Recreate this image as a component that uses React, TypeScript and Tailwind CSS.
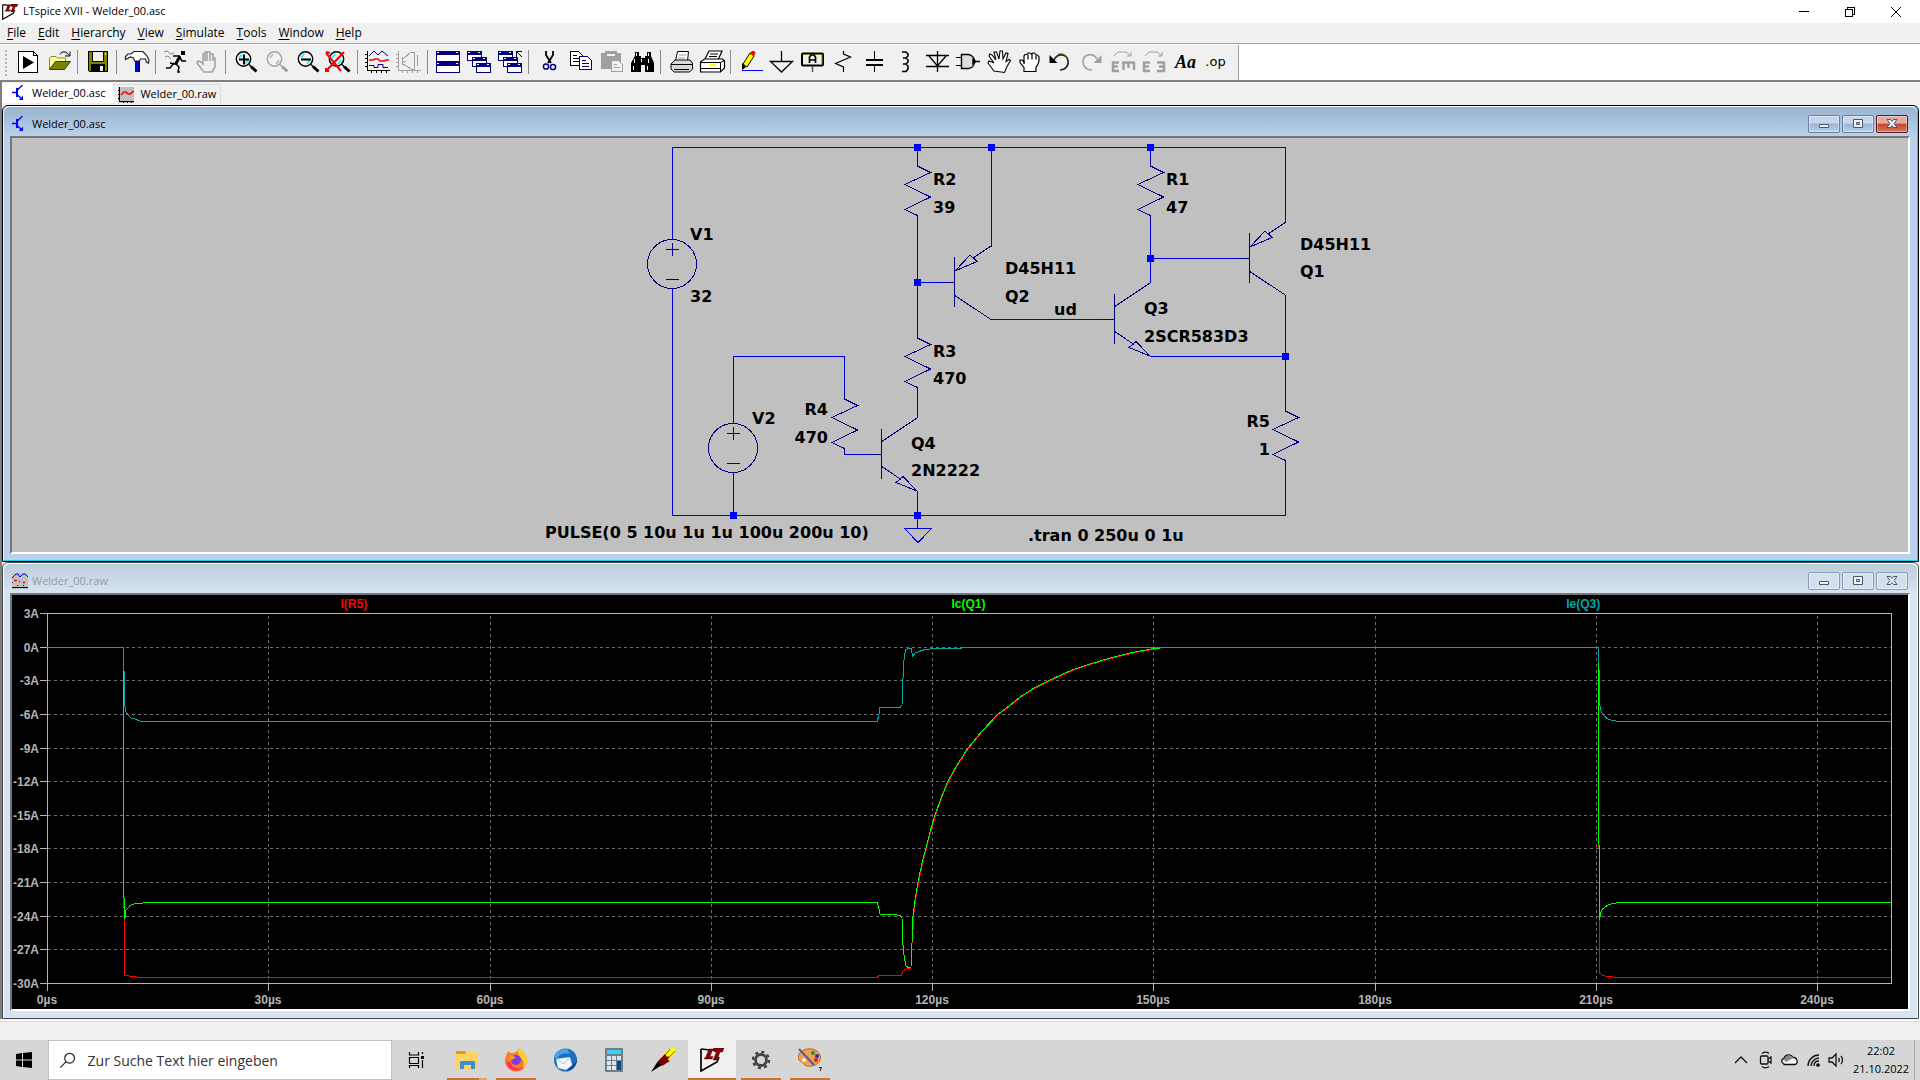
import type { ReactNode } from 'react'

const NAVY = '#000080'
const GRAY = '#a0a0a0'

const menus = ['File', 'Edit', 'Hierarchy', 'View', 'Simulate', 'Tools', 'Window', 'Help']

/* ---------- Toolbar icons, drawn in a 31x24 box ---------- */

function Magnifier({ color = '#000', glass = '#00ffff', children }: { color?: string; glass?: string; children?: ReactNode }) {
    return (
        <>
            <circle cx="12.5" cy="9" r="7.2" fill="#f4f4f4" stroke={color} strokeWidth="1.4" />
            <path d="M8 8l3-4M14 14l3-4" stroke={glass} strokeWidth="1.6" />
            <path d="M18 14.5l2 2" stroke={color} strokeWidth="1.5" />
            <path d="M20 16.5l5.5 5" stroke={color} strokeWidth="3" />
            {children}
        </>
    )
}

function MiniWindow({ x, y }: { x: number; y: number }) {
    return (
        <g shapeRendering="crispEdges">
            <rect x={x + 0.5} y={y + 0.5} width="14" height="9" fill="#fff" stroke={NAVY} />
            <rect x={x} y={y} width="15" height="4" fill={NAVY} />
            <rect x={x + 1} y={y + 1} width="2" height="1" fill="#fff" />
            <rect x={x + 11} y={y + 1} width="2" height="1" fill="#fff" />
        </g>
    )
}

function Cascade() {
    return (
        <>
            <MiniWindow x={3} y={1} />
            <MiniWindow x={8} y={7} />
            <MiniWindow x={12} y={13} />
        </>
    )
}

type Tool = { name: string; icon: ReactNode }

const toolGroups: Tool[][] = [
    [
        {
            name: 'New schematic',
            icon: (
                <>
                    <path d="M5.5 1.5h15l4 4v17h-19z" fill="#fff" stroke="#000" shapeRendering="crispEdges" />
                    <path d="M20.5 1.5v4h4" fill="none" stroke="#000" shapeRendering="crispEdges" />
                    <path d="M10 6l11 6.5-11 6.5z" fill="#000" />
                </>
            ),
        },
        {
            name: 'Open',
            icon: (
                <>
                    <path d="M5.5 19V8L7 6.5h5L13.5 8h8v5H11z" fill="#ffff9a" stroke="#8a8a20" />
                    <path d="M5.5 19.5l6-8h15l-6 8z" fill="#808000" stroke="#3c3c00" />
                    <path d="M16 4.5L18 2h4l3 3.5M26 1.5V6h-5" fill="none" stroke="#000" />
                </>
            ),
        },
    ],
    [
        {
            name: 'Save',
            icon: (
                <g shapeRendering="crispEdges">
                    <path d="M5 1h20v21H6l-1-1z" fill="#000" />
                    <path d="M6 2h18v19H6z" fill="#808000" />
                    <path d="M9 1h12v11H9z" fill="#000" />
                    <path d="M10 2h10v9H10zM22 3h1v2h-1z" fill="#f0f0f0" />
                    <path d="M8 14h14v8H8z" fill="#000" />
                    <path d="M17 16h3v5h-3z" fill="#f0f0f0" />
                </g>
            ),
        },
    ],
    [
        {
            name: 'Control panel',
            icon: (
                <>
                    <path d="M3.5 9.5v-3L6 4h3l3-2.5h9L25 6l2 4-.5 3-2-1-1-3h-5l-1 2h-5l-1-3-3-1z" fill="#fff" stroke="#222" strokeWidth="1.2" />
                    <path d="M13 11h5v11h-5z" fill="#0000ff" />
                    <path d="M16 11h2v11h-2z" fill={NAVY} />
                </>
            ),
        },
    ],
    [
        {
            name: 'Run',
            icon: (
                <>
                    <path d="M20 1h4v4h-4z" fill="#000" />
                    <path d="M19 6l-5 8-5-1M12 6h6l3 5h4M14 13l4 4-1 5h2M13 13l-4 5H5" fill="none" stroke="#000" strokeWidth="1.5" />
                    <path d="M18 5l-5 9 3 1 4-8z" fill="#000" />
                    <path d="M3 2l3-1 4 3 3-1M4 7l3-1 3 3" fill="none" stroke="#888" />
                </>
            ),
        },
        {
            name: 'Halt',
            icon: (
                <path
                    d="M11 21l-6-8 1-2 3 1 2 2V4h2v7M13 11V2h2v9M15 11V2h3v9M18 11V4h3v7M21 8h2v9l-3 5h-9"
                    fill="none"
                    stroke={GRAY}
                    strokeWidth="1.5"
                />
            ),
        },
    ],
    [
        { name: 'Zoom in', icon: <Magnifier><path d="M8 9.5h10M13 4.5v10" stroke="#000" strokeWidth="2" /></Magnifier> },
        { name: 'Pan', icon: <Magnifier color={GRAY} glass="#b8b8b8" /> },
        { name: 'Zoom out', icon: <Magnifier><path d="M8 9.5h10" stroke="#000" strokeWidth="2" /></Magnifier> },
        {
            name: 'Zoom to fit',
            icon: (
                <Magnifier>
                    <path d="M2 3l15 18M20 2L3 20M2 2l4 1M2 18v3h3" fill="none" stroke="#ff0000" strokeWidth="2" />
                </Magnifier>
            ),
        },
    ],
    [
        {
            name: 'Autorange',
            icon: (
                <g fill="none">
                    <path
                        d="M4.5 1v19.5H27M2 4.5h2M2 8.5h2M2 12.5h2M2 16.5h2M8.5 21v2M13.5 21v2M18.5 21v2M23.5 21v2"
                        stroke="#000"
                        shapeRendering="crispEdges"
                    />
                    <path d="M6 6l5-5 4 4 4-4 6 5" stroke={NAVY} />
                    <path d="M6 10h4l2-1h3l2 2h4l2-1h3" stroke="#ff0000" strokeWidth="1.4" />
                    <path d="M6 15.5h5v2h4v-3h5v3h5" stroke={NAVY} />
                </g>
            ),
        },
        {
            name: 'Add trace',
            icon: (
                <g fill="none" stroke={GRAY} shapeRendering="crispEdges">
                    <path d="M4.5 1v19.5H27M2 4.5h2M2 8.5h2M2 12.5h2M2 16.5h2M8.5 21v2M13.5 21v2M18.5 21v2M23.5 21v2" />
                    <path d="M8.5 7v8M8 11.5h4M9 9l8-7h4M9 14l8 5h4M20.5 2v17M23.5 5v11" />
                </g>
            ),
        },
    ],
    [
        {
            name: 'Tile windows',
            icon: (
                <g shapeRendering="crispEdges">
                    <path d="M3.5 1.5h23v21h-23z" fill="#fff" stroke={NAVY} />
                    <path d="M3 1h24v4H3zM3 11h24v5H3z" fill={NAVY} />
                    <path d="M4 2h2v1H4zM23 2h2v1h-2zM4 13h2v1H4zM23 13h2v1h-2z" fill="#fff" />
                </g>
            ),
        },
        { name: 'Cascade windows', icon: <Cascade /> },
        {
            name: 'Close all windows',
            icon: (
                <>
                    <Cascade />
                    <path d="M19 0h9v7h-9z" fill="#f0f0f0" />
                    <path d="M21.5 7V1.5H27M22 2l5 5" fill="none" stroke="#000" />
                </>
            ),
        },
    ],
    [
        {
            name: 'Cut',
            icon: (
                <g fill="none">
                    <path d="M12 1v4l5 8M19 1v4l-5 8" stroke="#000" strokeWidth="1.8" />
                    <circle cx="12" cy="16.5" r="2.6" stroke={NAVY} strokeWidth="1.5" />
                    <circle cx="19" cy="17" r="2.6" stroke={NAVY} strokeWidth="1.5" />
                </g>
            ),
        },
        {
            name: 'Copy',
            icon: (
                <g shapeRendering="crispEdges" fill="#fff">
                    <path d="M5.5 1.5h8l4 4v10h-12z" stroke="#000" />
                    <path d="M8 5.5h4M8 8.5h7M8 11.5h7" stroke="#000" />
                    <path d="M14.5 6.5h8l4 4v9h-12z" stroke={NAVY} />
                    <path d="M17 10.5h4M17 13.5h7M17 16.5h7" stroke={NAVY} />
                </g>
            ),
        },
        {
            name: 'Paste',
            icon: (
                <g shapeRendering="crispEdges">
                    <path d="M5 3h4V1h12v2h4v16H5z" fill={GRAY} />
                    <path d="M11 4h8v2h-8z" fill="#f0f0f0" />
                    <path d="M15.5 10.5h7l4 4v7h-11z" fill="#f0f0f0" stroke={GRAY} />
                    <path d="M18 14.5h3M18 17.5h6" stroke={GRAY} />
                </g>
            ),
        },
        {
            name: 'Find',
            icon: (
                <>
                    <path d="M8 2h4v4h2v2h4V6h2V2h4v4l3 7v9h-9v-7h-4v7H4v-9l4-7z" fill="#000" />
                    <path d="M9 3h1v3H9zM21 3h1v3h-1zM7 9h1v4H7zM14 9h1v3h-1zM21 9h1v4h-1zM6 16h1v4H6zM20 16h1v4h-1z" fill="#fff" />
                </>
            ),
        },
    ],
    [
        {
            name: 'Print',
            icon: (
                <>
                    <path d="M9.5 11l2-9.5h11l-1 9.5" fill="#fff" stroke="#000" />
                    <path d="M13 5h7M12 8h7" stroke="#999" />
                    <path d="M5 14l4-4h15l2.5 3v6l-3 3H8l-3-3z" fill="#d8d8d8" stroke="#000" />
                    <path d="M5 14.5h21M8 19.5h15" stroke="#000" />
                </>
            ),
        },
        {
            name: 'Print setup',
            icon: (
                <>
                    <path d="M8 9l4-8h13l-4 9" fill="#fff" stroke="#000" strokeWidth="1.2" />
                    <path d="M13 4h8M12 6.5h8" stroke="#000" />
                    <path d="M3.5 12l4-3h18l2 2v7l-4 4h-20z" fill="#fff" stroke="#000" strokeWidth="1.2" />
                    <path d="M3.5 12.5h20l4-2M23.5 12.5v9M3.5 18.5h20" fill="none" stroke="#000" />
                    <path d="M13 14h6v2h-6z" fill="#ffff00" />
                </>
            ),
        },
    ],
    [
        {
            name: 'Draw wire',
            icon: (
                <>
                    <path d="M7 14l7-11 4 3-7 11z" fill="#ffff00" stroke="#000" />
                    <path d="M14 3l2-2h2l1.500 1.500L18 6.500z" fill="#ff0000" />
                    <path d="M6 13l4 4-4 3z" fill="#000" />
                    <path d="M6 20.5h21" stroke="#0000ff" shapeRendering="crispEdges" />
                </>
            ),
        },
        { name: 'Ground', icon: <path d="M14.5 1v10M3.5 11.5h22L14.5 22z" fill="none" stroke="#000" strokeWidth="1.3" /> },
        {
            name: 'Label net',
            icon: (
                <g fill="none">
                    <rect x="4" y="3.5" width="21" height="12" rx="1" stroke="#000" strokeWidth="2" />
                    <path d="M5 4.5h19v10" stroke="#808000" />
                    <path d="M11.5 13V7L13 5h3l1.5 2v6M11.5 10h6" stroke="#000" strokeWidth="1.7" />
                    <path d="M14.5 16v6" stroke="#555" strokeWidth="1.5" />
                </g>
            ),
        },
        { name: 'Resistor', icon: <path d="M14.500 1v3l7 3-15 6.500 8 3.500v5" fill="none" stroke="#000" strokeWidth="1.2" /> },
        {
            name: 'Capacitor',
            icon: (
                <>
                    <path d="M14.500 1v9M14.500 15v7" stroke="#000" />
                    <path d="M6 10h17M6 15h17" stroke="#000" strokeWidth="2" />
                </>
            ),
        },
        {
            name: 'Inductor',
            icon: <path d="M11 2h4l2 2v2l-2 2h-3M15 8l2 2v2l-2 2h-3M15 14l2 2v3l-2 2.5h-4" fill="none" stroke="#000" strokeWidth="1.6" />,
        },
        {
            name: 'Diode',
            icon: <path d="M15.5 1v21M4 5.5h23M4 16.5h23M7 6l8.5 10L24 6" fill="none" stroke="#000" strokeWidth="1.3" />,
        },
        {
            name: 'Component',
            icon: (
                <>
                    <path d="M8.5 4.5h7c8 1 8 13 0 14h-7z" fill="#ddd" stroke="#000" strokeWidth="1.4" />
                    <path d="M3 7.5h5M3 15.5h5" stroke="#000" />
                    <path d="M20 11.5h7M20 9.5l3 2-3 2z" stroke="#000" strokeWidth="1.5" />
                </>
            ),
        },
        {
            name: 'Move',
            icon: (
                <path
                    d="M10 21l-6-8 1-2 3 1 2 1-5-7 1-2 2 1 4 5-2-8h2.5l2.500 7 1-8h2.500l.5 8 3-6 2 .5-2 8 3-2 1.500 1-4 7-2 5z"
                    fill="#fff"
                    stroke="#000"
                    strokeWidth="1.1"
                />
            ),
        },
        {
            name: 'Drag',
            icon: (
                <g stroke="#000" strokeWidth="1.2">
                    <path d="M9 21.500v-4l-4-5V10h2l2 2V6l1-1.500h2L13 3h2l1.500 1L18 3h1.500L21 5h1.500L24 7v4l-1 3-2 3.500v4z" fill="#fff" />
                    <path d="M13 4.500v5M17 4v5.500M21 5.500v4M9 11v3" fill="none" />
                </g>
            ),
        },
        {
            name: 'Undo',
            icon: (
                <>
                    <path d="M8 10c3-7 13-7 14 1 1 5-3 9-8 9" fill="none" stroke="#222" strokeWidth="1.6" />
                    <path d="M12 4c4-1 8 0 9 5" fill="none" stroke="#808000" />
                    <path d="M3.500 5v8h8z" fill="#000" />
                </>
            ),
        },
        {
            name: 'Redo',
            icon: (
                <>
                    <path d="M20 9c-4-7-14-5-14 3 0 5 4 8 9 8" fill="none" stroke={GRAY} strokeWidth="1.6" />
                    <path d="M24.500 5v8h-8z" fill={GRAY} />
                </>
            ),
        },
        {
            name: 'Rotate',
            icon: (
                <g fill="none" stroke={GRAY}>
                    <path d="M6 6l4-4h8l5 4M23 2v4h-4" />
                    <path d="M11 12.500H5v8.500h6M5 16.500h5M14 12.500h13M15.500 12v8M20.500 12v6M26 12v8" strokeWidth="2.500" />
                </g>
            ),
        },
        {
            name: 'Mirror',
            icon: (
                <g fill="none" stroke={GRAY}>
                    <path d="M6 6l4-4h8l5 4M23 2v4h-4" />
                    <path d="M11 12.500H5v8.500h6M5 16.500h5M18 12.500h7v8.500h-7M25 16.500h-5" strokeWidth="2.500" />
                </g>
            ),
        },
    ],
]

/* ---------- MDI window pieces ---------- */

function TransistorIcon() {
    return (
        <svg viewBox="0 0 16 16" className="h-4 w-4" fill="none" stroke="#0000ff" strokeWidth="1.4" aria-hidden="true">
            <path d="M0 7.5h5M10.500 0L5 5.500M5 9.500l5 4.500" />
            <path d="M5 3v9" strokeWidth="2" />
            <path d="M11 10.500V15H7z" fill="#0000ff" stroke="none" />
        </svg>
    )
}

function WaveIcon() {
    return (
        <svg viewBox="0 0 16 16" className="h-4 w-4" fill="none" aria-hidden="true">
            <path d="M0 0h16v16H0z" fill="#c0c0c0" />
            <path d="M1.5 0v14.5H16M0 3.5h1M0 7.5h1M0 11.5h1M5.5 14v2M9.5 14v2M13.5 14v2" stroke="#000" />
            <path d="M3 8l3-3h2l2 2h2l4-3" stroke="#ff0000" strokeWidth="1.6" />
        </svg>
    )
}

function PlotIcon() {
    return (
        <svg viewBox="0 0 16 16" className="h-4 w-4" fill="none" aria-hidden="true">
            <path d="M0 0h16v16H0z" fill="#c0c0c0" />
            <path d="M1 4l3-3h2l2 3 3-3h2l3 3" stroke="#0000ff" />
            <path d="M2 7.5h3M7 8.5h1M11 9.5h2" stroke="#ff0000" strokeWidth="1.5" />
            <path d="M0 14.5h16M0 4.5h1M0 9.5h1M5 12.5h1M11 12.5h1" stroke="#000" />
        </svg>
    )
}

const glyphs = {
    minimize: <path d="M11.5 9.5h9v3h-9z" />,
    maximize: <path d="M11.5 4.5h9v8h-9zM14.5 7.5h3v2h-3z" fillRule="evenodd" />,
    close: <path d="M11 4.5h3.5l1.500 2 1.500-2H21l-3 4 3 4h-3.500l-1.500-2-1.500 2H11l3-4z" />,
}

function ChildButton({ kind, active }: { kind: keyof typeof glyphs; active: boolean }) {
    let look = 'border-[#8c9cb8] bg-[#d3e0ee]'
    if (active) {
        look =
            kind === 'close'
                ? 'border-[#5a1a20] bg-linear-to-b from-[#e8a79c] from-45% via-[#c0452f] via-50% to-[#d47a62]'
                : 'border-[#6b7f9d] bg-linear-to-b from-[#c3d6eb] from-45% via-[#9ab5d2] via-50% to-[#b9d1ea]'
    }
    return (
        <button aria-label={kind} className={`h-[18px] w-8 rounded-xs border inset-ring inset-ring-white/40 ${look}`}>
            <svg viewBox="1 1 30 16" className="h-4 w-full" fill="#f4f4f4" stroke="#4a5670" aria-hidden="true">
                {glyphs[kind]}
            </svg>
        </button>
    )
}

function ChildWindow({ title, icon, active, children }: { title: string; icon: ReactNode; active: boolean; children: ReactNode }) {
    return (
        <section
            className={`flex min-h-0 flex-1 flex-col rounded-t-md border ${
                active ? 'border-black bg-[#b9d1ea]' : 'border-[#4a4a4a] bg-[#d7e4f2]'
            }`}
        >
            <div
                className={`flex min-h-0 flex-1 flex-col rounded-t-md border-x pr-[7px] pl-[6px] ${
                    active
                        ? 'border-b border-l-[#e8f2fc] border-r-[#20d0f0] border-b-[#20d0f0] bg-[#b9d1ea] pb-[6px]'
                        : 'border-white bg-[#d7e4f2] pb-[7px]'
                }`}
            >
                <header
                    className={`-mr-[7px] -ml-[6px] flex h-[30px] shrink-0 items-center rounded-t-md border-t border-white pt-[5px] pr-[9px] pl-2 text-[11px] ${
                        active ? 'bg-linear-to-b from-[#99b4d1] to-[#b9d1ea] text-black' : 'bg-linear-to-b from-[#bfcddb] to-[#d7e4f2] text-[#9a9a9a]'
                    }`}
                >
                    {icon}
                    <h2 className="ml-1 flex-1">{title}</h2>
                    <div className="flex gap-[2px]">
                        <ChildButton kind="minimize" active={active} />
                        <ChildButton kind="maximize" active={active} />
                        <ChildButton kind="close" active={active} />
                    </div>
                </header>
                <div className="min-h-0 flex-1 border-2 border-t-[#777] border-r-white border-b-white border-l-[#777]">{children}</div>
            </div>
        </section>
    )
}

/* ---------- Schematic ---------- */

const wires = [
    'M672.5 239V147.5H1285.5V222',
    'M672.5 289V515.5H1285.5V460',
    'M733.5 423V356.5H844.5V399',
    'M733.5 473V515',
    'M844.5 449V454.5H869',
    'M917.5 147V166M917.5 215V338M917.5 387V418M917.5 491V528',
    'M917 282.5H943M991.5 147V247M991 319.5H1102',
    'M1150.5 147V166M1150.5 215V283M1150 258.5H1237M1150 356.5H1285',
    'M1285.5 295V411',
]

const junctions = [
    [917, 147],
    [991, 147],
    [1150, 147],
    [917, 282],
    [1150, 258],
    [1285, 356],
    [733, 515],
    [917, 515],
]

const resistors = [
    [917, 166],
    [1150, 166],
    [917, 338],
    [844, 399],
    [1285, 411],
]

const labels: [number, number, string, ('end' | 'start')?][] = [
    [690, 240, 'V1'],
    [690, 302, '32'],
    [933, 185, 'R2'],
    [933, 213, '39'],
    [1166, 185, 'R1'],
    [1166, 213, '47'],
    [933, 357, 'R3'],
    [933, 384, '470'],
    [828, 415, 'R4', 'end'],
    [828, 443, '470', 'end'],
    [752, 424, 'V2'],
    [911, 449, 'Q4'],
    [911, 476, '2N2222'],
    [1005, 274, 'D45H11'],
    [1005, 302, 'Q2'],
    [1054, 315, 'ud'],
    [1144, 314, 'Q3'],
    [1144, 342, '2SCR583D3'],
    [1300, 250, 'D45H11'],
    [1300, 277, 'Q1'],
    [1270, 427, 'R5', 'end'],
    [1270, 455, '1', 'end'],
    [545, 538, 'PULSE(0 5 10u 1u 1u 100u 200u 10)'],
    [1028, 541, '.tran 0 250u 0 1u'],
]

function Source({ x, y }: { x: number; y: number }) {
    return (
        <>
            <circle cx={x} cy={y} r="24.5" />
            <path d={`M${x - 6} ${y - 14.5}h13M${x + 0.5} ${y - 21}v13M${x - 6} ${y + 15.5}h13`} />
        </>
    )
}

function Npn({ x, y }: { x: number; y: number }) {
    return (
        <path
            d={`M${x - 12} ${y + 0.5}h12M${x + 0.5} ${y - 25}v50M${x} ${y - 12}l36 -24M${x} ${y + 12}l20 13.5M${x + 36} ${y + 37}l-14 -14.5l-7 6z`}
        />
    )
}

function Pnp({ x, y }: { x: number; y: number }) {
    return (
        <path
            d={`M${x - 12} ${y + 0.5}h12M${x + 0.5} ${y - 25}v50M${x + 37} ${y - 36}l-18 12M${x} ${y + 13}l37 24.5M${x + 1} ${y - 11}l15 -16l7 6.5z`}
        />
    )
}

function Schematic() {
    return (
        <svg viewBox="12 138 1896 414" className="block h-full w-full bg-[#c0c0c0]" role="img" aria-label="Welder_00 schematic">
            <g fill="none" shapeRendering="crispEdges">
                <g stroke="#0000e6">
                    {wires.map((d) => (
                        <path key={d} d={d} />
                    ))}
                    <path d="M904.5 528.5h27l-13.5 14z" />
                </g>
                <g stroke={NAVY}>
                    {resistors.map(([x, y]) => (
                        <path key={`${x}-${y}`} d={`M${x + 0.5} ${y - 6}v6l13 6.5l-25.5 12l25.5 12.5l-25.5 12.5l12.5 6v5`} />
                    ))}
                    <Source x={672} y={264} />
                    <Source x={733} y={448} />
                    <Npn x={881} y={454} />
                    <Npn x={1114} y={319} />
                    <Pnp x={954} y={282} />
                    <Pnp x={1249} y={258} />
                </g>
                {junctions.map(([x, y]) => (
                    <rect key={`${x}-${y}`} x={x - 3} y={y - 3} width="7" height="7" fill="#0000ff" />
                ))}
            </g>
            <g className="font-['DejaVu_Sans',Verdana,sans-serif] text-[16px] font-bold" fill="#000">
                {labels.map(([x, y, text, anchor]) => (
                    <text key={`${x}-${y}`} x={x} y={y} textAnchor={anchor ?? 'start'}>
                        {text}
                    </text>
                ))}
            </g>
        </svg>
    )
}

/* ---------- Waveform plot ---------- */

const LEFT = 47.5
const RIGHT = 1891.5
const TOP = 613.5
const BOTTOM = 983.5

const yTicks = [3, 0, -3, -6, -9, -12, -15, -18, -21, -24, -27, -30]
const xTicks = [0, 30, 60, 90, 120, 150, 180, 210, 240]

const xAt = (us: number) => Math.floor(LEFT + ((RIGHT - LEFT) * us) / 250) + 0.5
const yAt = (amp: number) => Math.floor(TOP + ((BOTTOM - TOP) * (3 - amp)) / 33) + 0.5

const decay =
    '912,943 913,916 915,900 918,882 922,863 926,848 930,832 935,815 941,798 948,781 957,765 968,748 982,731 998,714 1009,706 1020,697 1034,688 1050,680 1072,670 1090,664 1110,658 1130,653 1151,649 1160,648'

const traces = [
    {
        name: 'I(R5)',
        color: '#ff0000',
        at: 1 / 6,
        points: '123.5,896 124.5,919 124.5,975 129,976 141,977.5 877,977.5 879,975.5 901,975.5 903,971 907,968.5 911,968',
        tail: '1598.5,840 1599.5,855 1599.5,973 1602,975 1606,976.5 1619,977.5 1891,977.5',
    },
    {
        name: 'Ic(Q1)',
        color: '#00ff00',
        at: 1 / 2,
        points: `123.5,670 123.5,896 124.5,900 124.5,919 125.5,916 126,910 128,908 130,905.5 134,904 137,903.5 150,902.5 877,902.5 878.5,906 880,914 884,914.5 893,914.5 900,915.5 902,918 902.5,940 904,955 906,966 908,967.5 911,967 ${decay}`,
        tail: '1598.5,663 1598.5,840 1599.5,850 1599.5,920 1601,912 1603,908.5 1608,905 1613,903.5 1619,902.5 1891,902.5',
    },
    {
        name: 'Ie(Q3)',
        color: '#00a8a8',
        at: 5 / 6,
        points:
            '47,647.5 123.5,647.5 123.5,670 124.5,672 124.5,705 126,712 128,715 131,718 135,719 141,721.5 877,721.5 878.5,717 880,707.5 900,707.5 902,705 903,678 904,660 905.5,650 908,648.5 911.5,648.5 912.5,656.5 915,653 919,651.5 925,649.5 935,648.5 961,648.5 963,647.5 1598.5,647.5 1598.5,663',
        tail: '1599.5,670 1599.5,704 1601,711 1604,716 1608,719 1613,720.5 1619,721.5 1891,721.5',
    },
]

function Plot() {
    return (
        <svg viewBox="12 595 1896 414" className="block h-full w-full bg-black" role="img" aria-label="Welder_00 waveforms">
            <g fill="none" shapeRendering="crispEdges">
                <g stroke="#6c6c6c" strokeDasharray="3 3">
                    {yTicks.slice(1, -1).map((amp) => (
                        <path key={amp} d={`M${LEFT} ${yAt(amp)}H${RIGHT}`} />
                    ))}
                    {xTicks.slice(1).map((us) => (
                        <path key={us} d={`M${xAt(us)} ${TOP + 2}V${BOTTOM}`} />
                    ))}
                </g>
                <g stroke="#b4b4b4">
                    <rect x={LEFT} y={TOP} width={RIGHT - LEFT} height={BOTTOM - TOP} />
                    {yTicks.map((amp) => (
                        <path key={amp} d={`M40 ${yAt(amp)}H${LEFT}`} />
                    ))}
                    {xTicks.map((us) => (
                        <path key={us} d={`M${xAt(us)} ${BOTTOM}v7`} />
                    ))}
                </g>
                <polyline points={decay} stroke="#ff0000" transform="translate(0.5 0.5)" />
                {traces.map((trace) => (
                    <g key={trace.name} stroke={trace.color}>
                        <polyline points={trace.points} />
                        <polyline points={trace.tail} />
                    </g>
                ))}
            </g>
            <g className="font-['Liberation_Sans',Arial,sans-serif] text-[12px] font-bold" fill="#b4b4b4">
                {yTicks.map((amp) => (
                    <text key={amp} x="39" y={yAt(amp) + 4.5} textAnchor="end">
                        {amp}A
                    </text>
                ))}
                {xTicks.map((us) => (
                    <text key={us} x={xAt(us) - 0.5} y="1004" textAnchor="middle">
                        {us}µs
                    </text>
                ))}
            </g>
            <g className="font-['Liberation_Sans',Arial,sans-serif] text-[12px] font-bold">
                {traces.map((trace) => (
                    <text key={trace.name} x={LEFT + (RIGHT - LEFT) * trace.at - 1} y="608" textAnchor="middle" fill={trace.color}>
                        {trace.name}
                    </text>
                ))}
            </g>
        </svg>
    )
}

/* ---------- Taskbar ---------- */

function LtLogo({ className }: { className: string }) {
    return (
        <svg viewBox="0 0 24 24" className={className} aria-hidden="true">
            <path d="M1 1l9 1M1 1v22L17 14l2-5" fill="none" stroke="#000" strokeWidth="1.7" />
            <path d="M9 1h4l-3 7.500h3l-1 2.500H4l2-2.500zM12 2l2-2h10l-1.500 4H20l-3 8h-4l3.500-8H15z" fill="#8b0000" stroke="#300" strokeWidth="0.4" />
        </svg>
    )
}

const apps: { name: string; bar: string; icon: ReactNode }[] = [
    {
        name: 'Explorer',
        bar: 'bg-linear-to-r from-[#c8762b] from-80% to-[#e0a878] to-80% mx-1',
        icon: (
            <svg viewBox="0 0 24 24" className="h-6 w-6">
                <path d="M1 3h9l2 3h11v5H1z" fill="#e0a008" />
                <path d="M1 6h9l2-2h11v17H1z" fill="#ffd262" />
                <path d="M5 21v-7l1-1h13l1 1v7h-4v-4H9v4z" fill="#3a8fd8" />
            </svg>
        ),
    },
    {
        name: 'Firefox',
        bar: 'bg-[#c8762b] mx-1',
        icon: (
            <svg viewBox="0 0 24 24" className="h-6 w-6">
                <path d="M3 6l1-3 2 2 4 0c2-1 4-2 5-5 4 2 8 7 8 12a11 11 0 0 1-22 1C1 10 2 8 3 6z" fill="#ff7a1f" />
                <path d="M15 0c4 2 8 7 8 12 0 3-2 7-4 8 1-5 1-8-3-11-2-3-3-5-1-9z" fill="#ffd02e" />
                <path d="M2 14a10.500 10.500 0 0 0 18 5c-5 3-12 1-14-5z" fill="#ff3060" />
                <circle cx="12" cy="12" r="5" fill="#7a3fe0" />
                <path d="M5 8c3-1 5 0 7 2-2 0-4 1-4 3z" fill="#ff9a20" />
            </svg>
        ),
    },
    {
        name: 'Thunderbird',
        bar: '',
        icon: (
            <svg viewBox="0 0 24 24" className="h-6 w-6">
                <circle cx="12.500" cy="12" r="11.500" fill="#1f6fc0" />
                <path d="M1 8C4 2 9 0 14 1l3 5c-6-2-11 0-13 5z" fill="#4aa3e8" />
                <path d="M13 23c7-1 11-6 11-12-2 5-5 9-11 12z" fill="#123c78" />
                <path d="M3 11l14-2 2 8-6 5-8-2z" fill="#f6f8fc" />
                <path d="M3 11l8 5 6-7" fill="none" stroke="#b8c4d6" />
            </svg>
        ),
    },
    {
        name: 'Rechner',
        bar: '',
        icon: (
            <svg viewBox="0 0 24 24" className="h-6 w-6">
                <rect x="3" width="18" height="24" rx="1" fill="#6f7f8a" />
                <path d="M5 2h14v4H5z" fill="#3fd0f5" />
                <path d="M5 8h4v4H5zM10 8h4v4h-4zM15 8h4v4h-4zM5 13h4v4H5zM10 13h4v4h-4zM5 18h4v4H5zM10 18h4v4h-4z" fill="#dfe6ea" />
                <path d="M15 13h4v9h-4z" fill="#0a4a8c" />
            </svg>
        ),
    },
    {
        name: 'Feather',
        bar: '',
        icon: (
            <svg viewBox="0 0 24 24" className="h-6 w-6">
                <path d="M9 11L17 1l7-1v5l-9 11z" fill="#ffff00" />
                <path d="M19 1l-8 10M24 3L13 15" stroke="#806000" />
                <path d="M7 13l7-7 2 3 2-1-1 4 2 1-8 5z" fill="#7a0000" />
                <path d="M0 24L7 13l4 4z" fill="#000" />
            </svg>
        ),
    },
    { name: 'LTspice XVII', bar: 'bg-[#c8762b]', icon: <LtLogo className="h-6 w-6" /> },
    {
        name: 'Einstellungen',
        bar: 'bg-[#c8762b] mx-1',
        icon: (
            <svg viewBox="0 0 24 24" className="h-6 w-6" fill="none" stroke="#444">
                <circle cx="12" cy="12" r="5.5" strokeWidth="2.8" />
                <circle cx="12" cy="12" r="8" strokeWidth="2.4" strokeDasharray="3.14 3.14" />
            </svg>
        ),
    },
    {
        name: 'Paint',
        bar: 'bg-[#c8762b] mx-1',
        icon: (
            <svg viewBox="0 0 24 24" className="h-6 w-6">
                <path d="M0 9C1 3 8 0 14 1c6 1 10 6 8 11-1 4-7 7-13 6-4-1-4-4-7-5-1-1-2-2-2-4z" fill="#f0a050" stroke="#b86820" />
                <circle cx="15" cy="5" r="2" fill="#209040" />
                <circle cx="19" cy="8" r="2" fill="#1030e0" />
                <circle cx="18" cy="12" r="2" fill="#e02020" />
                <circle cx="6" cy="12" r="2" fill="#fff3d8" />
                <path d="M1 1l15 16" stroke="#5860a0" strokeWidth="2.2" />
                <path d="M21 19.5h2.500L22 23" fill="none" stroke="#222" />
            </svg>
        ),
    },
]

function Taskbar() {
    return (
        <footer className="flex h-10 shrink-0 bg-[#d6d6d6]">
            <button aria-label="Start" className="flex w-12 items-center justify-center">
                <svg viewBox="0 0 16 16" className="h-4 w-4" aria-hidden="true">
                    <path d="M0 2l6-1v6.5H0zM7 1l9-1v7.5H7zM0 8.500h6V15l-6-1zM7 8.500h9V16l-9-1z" />
                </svg>
            </button>
            <label className="flex w-[344px] items-center gap-3 border border-[#c4c4c4] bg-white pl-[11px]">
                <svg viewBox="0 0 17 17" className="h-[17px] w-[17px]" fill="none" stroke="#222" strokeWidth="1.3" aria-hidden="true">
                    <circle cx="10.5" cy="6" r="5.3" />
                    <path d="M6.500 9.800L.5 16.300" />
                </svg>
                <input
                    aria-label="Suche"
                    placeholder="Zur Suche Text hier eingeben"
                    className="w-full bg-transparent text-[14px] outline-none placeholder:text-[#333]"
                />
            </label>
            <button aria-label="Taskansicht" className="flex w-[51px] items-center justify-center pr-[2px]">
                <svg viewBox="0 0 17 16" className="h-4 w-[17px]" fill="none" stroke="#000" strokeWidth="1.2" aria-hidden="true">
                    <path d="M1.5 0v3h9V0M1.5 5.5h9v6h-9zM1.5 16v-2.500h9V16M14.5 0v2M14.5 8v8" />
                    <path d="M13 4h3v3h-3z" fill="#000" stroke="none" />
                </svg>
            </button>
            <nav className="flex gap-px">
                {apps.map((app) => (
                    <button
                        key={app.name}
                        aria-label={app.name}
                        className={`flex w-12 flex-col ${app.name === 'LTspice XVII' ? 'bg-[#f0f0f0]' : ''}`}
                    >
                        <span className="flex h-[38px] items-center justify-center self-stretch pt-[2px]">{app.icon}</span>
                        <span className={`h-[2px] self-stretch ${app.bar}`} />
                    </button>
                ))}
            </nav>
            <div className="ml-auto flex items-center">
                <svg viewBox="0 0 110 24" className="h-6 w-[110px]" fill="none" stroke="#111" strokeWidth="1.3" aria-hidden="true">
                    <path d="M1 15l6-6 6 6" />
                    <rect x="26.5" y="8" width="7.5" height="8" rx="1" />
                    <path d="M34 11l3-2v6l-3-2M28 5.5c2-1.500 5-1.500 7 0M28 18.500c2 1.500 5 1.500 7 0" />
                    <path d="M50 16c-3-1-3-5 0-5.500 1-4 7-5 9-1 4-.5 6 6 2 7H50z" fill="#f4f4f4" />
                    <path d="M50 12c1-6 7-6 9-2l-7 4z" fill="#888" stroke="none" />
                    <path d="M74 18c0-6 5-11 11-11M77 18c0-4 4-8 8-8M80 18c0-3 2-5 5-5" />
                    <circle cx="84" cy="17" r="1.2" fill="#111" />
                    <path d="M95 10h3l4-4v12l-4-4h-3zM104.500 10c1 1 1 3 0 4M107 8c2 2 2 6 0 8" />
                </svg>
                <time className="ml-1 w-[66px] text-center text-[11px] leading-[18px] text-black">
                    22:02
                    <br />
                    21.10.2022
                </time>
                <span className="h-10 w-[6px] border-l border-[#a8a8a8]" />
            </div>
        </footer>
    )
}

export default function App() {
    return (
        <div className="flex h-screen flex-col overflow-hidden bg-[#f0f0f0] font-['Open_Sans','Segoe_UI',sans-serif] text-[11px] text-black">
            <header className="flex h-[23px] shrink-0 items-center bg-white">
                <LtLogo className="ml-[2px] h-4 w-4" />
                <h1 className="ml-[5px] flex-1">LTspice XVII - Welder_00.asc</h1>
                <div className="flex h-full pr-px">
                    <button aria-label="Minimize" className="flex w-[46px] items-center justify-center">
                        <svg viewBox="0 0 10 10" className="h-[10px] w-[10px]" stroke="#000" shapeRendering="crispEdges">
                            <path d="M0 4.5h10" />
                        </svg>
                    </button>
                    <button aria-label="Restore" className="flex w-[46px] items-center justify-center">
                        <svg viewBox="0 0 10 10" className="h-[10px] w-[10px]" fill="none" stroke="#000" shapeRendering="crispEdges">
                            <path d="M.5 2.5h7v7h-7zM2.5 2V.5h7v7H8" />
                        </svg>
                    </button>
                    <button aria-label="Close" className="flex w-[46px] items-center justify-center">
                        <svg viewBox="0 0 10 10" className="h-[10px] w-[10px]" stroke="#000">
                            <path d="M0 0l10 10M10 0L0 10" />
                        </svg>
                    </button>
                </div>
            </header>

            <nav className="flex h-[21px] shrink-0 items-center border-b border-[#a0a0a0] pl-px text-[12px]">
                {menus.map((menu) => (
                    <button key={menu} className="px-[6px]">
                        <span className="underline underline-offset-2">{menu[0]}</span>
                        {menu.slice(1)}
                    </button>
                ))}
            </nav>

            <div className="flex h-[38px] shrink-0 border-t border-b-2 border-t-white border-b-[#808080] bg-white">
                <div role="toolbar" className="flex items-start border-r border-[#a0a0a0] bg-[#f0f0f0] pt-[5px] pr-[6px]">
                    <span className="mr-[6px] ml-[5px] h-[26px] border-l-2 border-dotted border-[#b8b8b8]" />
                    {toolGroups.map((group, i) => (
                        <div key={i} className="flex items-center">
                            {i > 0 && <span className="mr-[5px] ml-[2px] h-6 border-l border-[#8c8c8c]" />}
                            {group.map((tool) => (
                                <button key={tool.name} aria-label={tool.name} className="w-[31px]">
                                    <svg viewBox="0 0 31 24" className="h-6 w-[31px]" aria-hidden="true">
                                        {tool.icon}
                                    </svg>
                                </button>
                            ))}
                            {i === toolGroups.length - 1 && (
                                <>
                                    <button className="w-[31px] font-['Liberation_Serif',serif] text-[18px] leading-6 font-bold italic">Aa</button>
                                    <button className="w-[31px] pr-[2px] font-['DejaVu_Sans',sans-serif] text-[13px] leading-6">.op</button>
                                </>
                            )}
                        </div>
                    ))}
                </div>
            </div>

            <div role="tablist" className="flex h-[23px] shrink-0 items-start border-l-2 border-[#808080] pt-px">
                <button role="tab" aria-selected="true" className="flex h-5 items-center bg-white pr-2 pl-[10px]">
                    <TransistorIcon />
                    <span className="ml-1">Welder_00.asc</span>
                </button>
                <button role="tab" aria-selected="false" className="mt-px flex h-5 items-center border-t border-r border-[#dcdcdc] pr-1 pl-[5px]">
                    <WaveIcon />
                    <span className="ml-[6px]">Welder_00.raw</span>
                </button>
            </div>

            <main className="flex min-h-0 flex-1 flex-col border-r border-l-2 border-r-white border-l-[#808080]">
                <ChildWindow title="Welder_00.asc" icon={<TransistorIcon />} active>
                    <Schematic />
                </ChildWindow>
                <ChildWindow title="Welder_00.raw" icon={<PlotIcon />} active={false}>
                    <Plot />
                </ChildWindow>
            </main>

            <div className="h-[21px] shrink-0 pt-px">
                <div className="h-full border-t border-white">
                    <div className="border-t border-[#d8d8d8]" />
                </div>
            </div>

            <Taskbar />
        </div>
    )
}
